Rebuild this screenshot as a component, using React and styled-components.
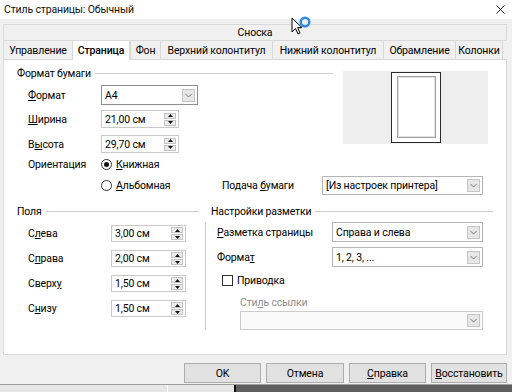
import React from "react";
import styled, { createGlobalStyle } from "styled-components";

const GlobalStyle = createGlobalStyle`
  html, body { margin: 0; padding: 0; }
  body {
    font-family: Roboto, "Noto Sans", "Liberation Sans", sans-serif;
    font-size: 10.5px;
    letter-spacing: -0.15px;
    color: #000;
    background: #f0f0f0;
    overflow: hidden;
  }
  #root { width: 512px; height: 392px; }
`;

const Window = styled.div`
  position: relative;
  width: 512px;
  height: 392px;
  display: flex;
  flex-direction: column;
  background: #f0f0f0;
  overflow: hidden;
`;

const TitleBar = styled.div`
  height: 19px;
  flex: none;
  background: #fff;
  display: flex;
  align-items: center;
  justify-content: space-between;
  padding: 0 7px 0 4px;
  color: #111;
`;

const Body = styled.div`
  display: flex;
  flex-direction: column;
  padding: 5px 5px 0 3px;
`;

const TabRowSingle = styled.div`
  height: 15px;
  border: 1px solid #d9d9d9;
  border-bottom: none;
  background: #f0f0f0;
  display: flex;
  align-items: center;
  justify-content: center;
`;

const TabRow = styled.div`
  display: flex;
  height: 18px;
  border-top: 1px solid #d9d9d9;
`;

const Tab = styled.div`
  width: ${(p) => p.$w}px;
  flex: none;
  box-sizing: border-box;
  display: flex;
  align-items: center;
  justify-content: center;
  border-left: 1px solid #d9d9d9;
  border-right: ${(p) => (p.$last || p.$active ? "1px solid #d9d9d9" : "none")};
  background: ${(p) => (p.$active ? "#fff" : "#f0f0f0")};
  font-weight: ${(p) => (p.$active ? 500 : 400)};
  position: relative;
  z-index: ${(p) => (p.$active ? 1 : 0)};
  height: ${(p) => (p.$active ? 19 : 18)}px;
`;

const Panel = styled.div`
  height: 296px;
  box-sizing: border-box;
  background: #fff;
  border: 1px solid #d9d9d9;
  padding: 6px 13px 0 13px;
`;

const TopGrid = styled.div`
  display: grid;
  grid-template-columns: 316px 145px;
  column-gap: 10px;
`;

const Column = styled.div`
  display: flex;
  flex-direction: column;
`;

const Legend = styled.div`
  display: flex;
  align-items: center;
  height: 14px;
  gap: 4px;
  white-space: nowrap;
  &::after {
    content: "";
    flex: 1;
    border-top: 1px solid #cdcdcd;
  }
`;

const Row = styled.div`
  display: flex;
  align-items: center;
  margin-top: ${(p) => p.$mt || 0}px;
  padding-left: ${(p) => p.$indent || 0}px;
  height: ${(p) => (p.$h ? p.$h + "px" : "auto")};
  white-space: nowrap;
`;

const Label = styled.div`
  width: ${(p) => p.$w}px;
  flex: none;
  color: ${(p) => (p.$disabled ? "#8c8c8c" : "#000")};
`;

const Key = styled.span`
  text-decoration: underline;
`;

const SelectBox = styled.div`
  width: ${(p) => p.$w}px;
  height: ${(p) => p.$h || 20}px;
  margin-left: ${(p) => p.$ml || 0}px;
  margin-top: ${(p) => p.$mt || 0}px;
  flex: none;
  box-sizing: border-box;
  border: 1px solid ${(p) => p.$border || "#ababab"};
  background: ${(p) => (p.$disabled ? "#fafafa" : "#fff")};
  display: flex;
  align-items: center;
  justify-content: space-between;
  padding-left: 3px;
`;

const ArrowBox = styled.div`
  width: 13px;
  height: 13px;
  box-sizing: border-box;
  margin-right: 2px;
  background: #e6e6e6;
  border: 1px solid #c6c6c6;
  display: flex;
  align-items: center;
  justify-content: center;
`;

const SpinBox = styled.div`
  width: ${(p) => p.$w}px;
  height: ${(p) => p.$h}px;
  flex: none;
  box-sizing: border-box;
  border: 1px solid #c9c9c9;
  background: #fff;
  display: flex;
  align-items: center;
  justify-content: space-between;
  padding-left: 3px;
`;

const SpinButtons = styled.div`
  display: flex;
  flex-direction: column;
  margin-right: 2px;
`;

const SpinBtn = styled.div`
  width: 12px;
  height: 6px;
  box-sizing: border-box;
  border: 1px solid #c3c3c3;
  background: #ececec;
  display: flex;
  align-items: center;
  justify-content: center;
  & + & { margin-top: 1px; }
`;

const Radio = styled.span`
  width: 11px;
  height: 11px;
  box-sizing: border-box;
  border-radius: 50%;
  border: 1px solid #333;
  display: inline-flex;
  align-items: center;
  justify-content: center;
  flex: none;
  margin-right: 4px;
  &::after {
    content: "";
    width: 5px;
    height: 5px;
    border-radius: 50%;
    background: ${(p) => (p.$checked ? "#111" : "transparent")};
  }
`;

const Check = styled.span`
  width: 11px;
  height: 11px;
  box-sizing: border-box;
  border: 1px solid #333;
  background: #fff;
  flex: none;
  margin-right: 4px;
`;

const RadioLabel = styled.div`
  display: flex;
  align-items: center;
  width: ${(p) => (p.$w ? p.$w + "px" : "auto")};
  flex: none;
`;

const PreviewBox = styled.div`
  margin-top: 5px;
  height: 73px;
  background: #efefef;
  display: flex;
  justify-content: center;
  align-items: center;
`;

const Page = styled.div`
  width: 50px;
  height: 71px;
  box-sizing: border-box;
  border: 1px solid #2b2b2b;
  background: #fff;
  padding: 3px 4px 4px 5px;
`;

const PageInner = styled.div`
  height: 100%;
  box-sizing: border-box;
  border: 1px solid #a0a0a0;
  box-shadow: inset 0 0 0 1px #e2e2e2;
`;

const BottomGrid = styled.div`
  display: grid;
  grid-template-columns: 182px 12px 282px;
  margin-top: 9px;
`;

const Divider = styled.div`
  margin: 18px 0 0 6px;
  border-left: 1px solid #cdcdcd;
`;

const ButtonRow = styled.div`
  display: flex;
  justify-content: flex-end;
  gap: 5px;
  margin-top: 8px;
`;

const Button = styled.div`
  width: ${(p) => p.$w}px;
  height: 20px;
  box-sizing: border-box;
  background: #e1e1e1;
  border: 1px solid #adadad;
  display: flex;
  align-items: center;
  justify-content: center;
`;

const Strip = styled.div`
  margin-top: auto;
  height: 7px;
  display: flex;
  border-top: 1px solid #9d9d9d;
`;

const StripPart = styled.div`
  width: ${(p) => (p.$w ? p.$w + "px" : "auto")};
  flex: ${(p) => (p.$w ? "none" : 1)};
  background: ${(p) => p.$bg};
  border-right: ${(p) => p.$edge || "none"};
`;

const Cursor = styled.svg`
  position: absolute;
  left: 291px;
  top: 16px;
`;

const Chevron = () => (
  <svg width="7" height="5" viewBox="0 0 7 5">
    <path d="M0.5 1 L3.5 4 L6.5 1" fill="none" stroke="#7a7a7a" strokeWidth="1" />
  </svg>
);

const Select = ({ w, h, children, border, disabled, ml, mt }) => (
  <SelectBox $w={w} $h={h} $border={border} $disabled={disabled} $ml={ml} $mt={mt}>
    <span>{children}</span>
    <ArrowBox>
      <Chevron />
    </ArrowBox>
  </SelectBox>
);

const Spin = ({ w, h, children }) => (
  <SpinBox $w={w} $h={h}>
    <span>{children}</span>
    <SpinButtons>
      <SpinBtn>
        <svg width="5" height="3" viewBox="0 0 5 3">
          <path d="M0 3 L2.5 0 L5 3 Z" fill="#111" />
        </svg>
      </SpinBtn>
      <SpinBtn>
        <svg width="5" height="3" viewBox="0 0 5 3">
          <path d="M0 0 L2.5 3 L5 0 Z" fill="#111" />
        </svg>
      </SpinBtn>
    </SpinButtons>
  </SpinBox>
);

const tabs = [
  { t: "Управление", w: 69 },
  { t: "Страница", w: 58, active: true },
  { t: "Фон", w: 30 },
  { t: "Верхний колонтитул", w: 112 },
  { t: "Нижний колонтитул", w: 111 },
  { t: "Обрамление", w: 72 },
  { t: "Колонки", w: 48 },
];

const margins = [
  { l: <>С<Key>л</Key>ева</>, v: "3,00 см" },
  { l: <>С<Key>п</Key>рава</>, v: "2,00 см" },
  { l: <>Сверх<Key>у</Key></>, v: "1,50 см" },
  { l: <>С<Key>н</Key>изу</>, v: "1,50 см" },
];

export default function App() {
  return (
    <Window>
      <GlobalStyle />
      <TitleBar>
        <span>Стиль страницы: Обычный</span>
        <svg width="9" height="9" viewBox="0 0 9 9">
          <path d="M0.5 0.5 L8.5 8.5 M8.5 0.5 L0.5 8.5" stroke="#222" strokeWidth="1" />
        </svg>
      </TitleBar>
      <Body>
        <TabRowSingle>Сноска</TabRowSingle>
        <TabRow>
          {tabs.map((tb, i) => (
            <Tab key={tb.t} $w={tb.w} $active={tb.active} $last={i === tabs.length - 1}>
              {tb.t}
            </Tab>
          ))}
        </TabRow>
        <Panel>
          <TopGrid>
            <Column>
              <Legend>Формат бумаги</Legend>
              <Row $mt={5} $indent={11}>
                <Label $w={73}><Key>Ф</Key>ормат</Label>
                <Select w={97} h={20} border="#8f8f8f">A4</Select>
              </Row>
              <Row $mt={5} $indent={11}>
                <Label $w={73}><Key>Ш</Key>ирина</Label>
                <Spin w={78} h={18}>21,00 см</Spin>
              </Row>
              <Row $mt={7} $indent={11}>
                <Label $w={73}>В<Key>ы</Key>сота</Label>
                <Spin w={78} h={18}>29,70 см</Spin>
              </Row>
              <Row $mt={3} $indent={11} $h={16}>
                <Label $w={73}>Ориентация</Label>
                <RadioLabel>
                  <Radio $checked />
                  <span><Key>К</Key>нижная</span>
                </RadioLabel>
              </Row>
            </Column>
            <PreviewBox>
              <Page>
                <PageInner />
              </Page>
            </PreviewBox>
          </TopGrid>
          <Row $mt={4} $indent={84}>
            <RadioLabel $w={121}>
              <Radio />
              <span><Key>А</Key>льбомная</span>
            </RadioLabel>
            <Label $w={100}>Подача <Key>б</Key>умаги</Label>
            <Select w={161} h={19} border="#b5b5b5">[Из настроек принтера]</Select>
          </Row>
          <BottomGrid>
            <Column>
              <Legend>Поля</Legend>
              {margins.map((m, i) => (
                <Row key={i} $mt={i === 0 ? 7 : 8} $indent={11}>
                  <Label $w={83}>{m.l}</Label>
                  <Spin w={75} h={17}>{m.v}</Spin>
                </Row>
              ))}
            </Column>
            <Divider />
            <Column>
              <Legend>Настройки разметки</Legend>
              <Row $mt={4} $indent={6}>
                <Label $w={115}><Key>Р</Key>азметка страницы</Label>
                <Select w={151} h={20} border="#b5b5b5">Справа и слева</Select>
              </Row>
              <Row $mt={5} $indent={6}>
                <Label $w={115}>Форма<Key>т</Key></Label>
                <Select w={151} h={20} border="#b5b5b5">1, 2, 3, ...</Select>
              </Row>
              <Row $mt={5} $indent={11} $h={16}>
                <Check />
                <span>Приводка</span>
              </Row>
              <Row $mt={7} $indent={29} $h={14}>
                <Label $w={200} $disabled>Сти<Key>л</Key>ь ссылки</Label>
              </Row>
              <Select w={243} h={19} ml={29} mt={2} border="#cccccc" disabled />
            </Column>
          </BottomGrid>
        </Panel>
        <ButtonRow>
          <Button $w={77}>OK</Button>
          <Button $w={78}>Отмена</Button>
          <Button $w={77}><Key>С</Key>правка</Button>
          <Button $w={76}><Key>В</Key>осстановить</Button>
        </ButtonRow>
      </Body>
      <Strip>
        <StripPart $w={167} $bg="#e6e6e6" $edge="1px solid #ffffff" />
        <StripPart $w={66} $bg="#e6e6e6" $edge="2px solid #111" />
        <StripPart $bg="#5e5e5e" />
      </Strip>
      <Cursor width="22" height="20" viewBox="0 0 22 20">
        <path d="M1 2 L1 16 L4.5 12.5 L7 18 L9 17 L6.6 11.6 L11 11.6 Z" fill="#fff" stroke="#000" strokeWidth="1" strokeLinejoin="round" />
        <circle cx="14" cy="6" r="4.3" fill="none" stroke="#2a8ae8" strokeWidth="2.4" />
      </Cursor>
    </Window>
  );
}
